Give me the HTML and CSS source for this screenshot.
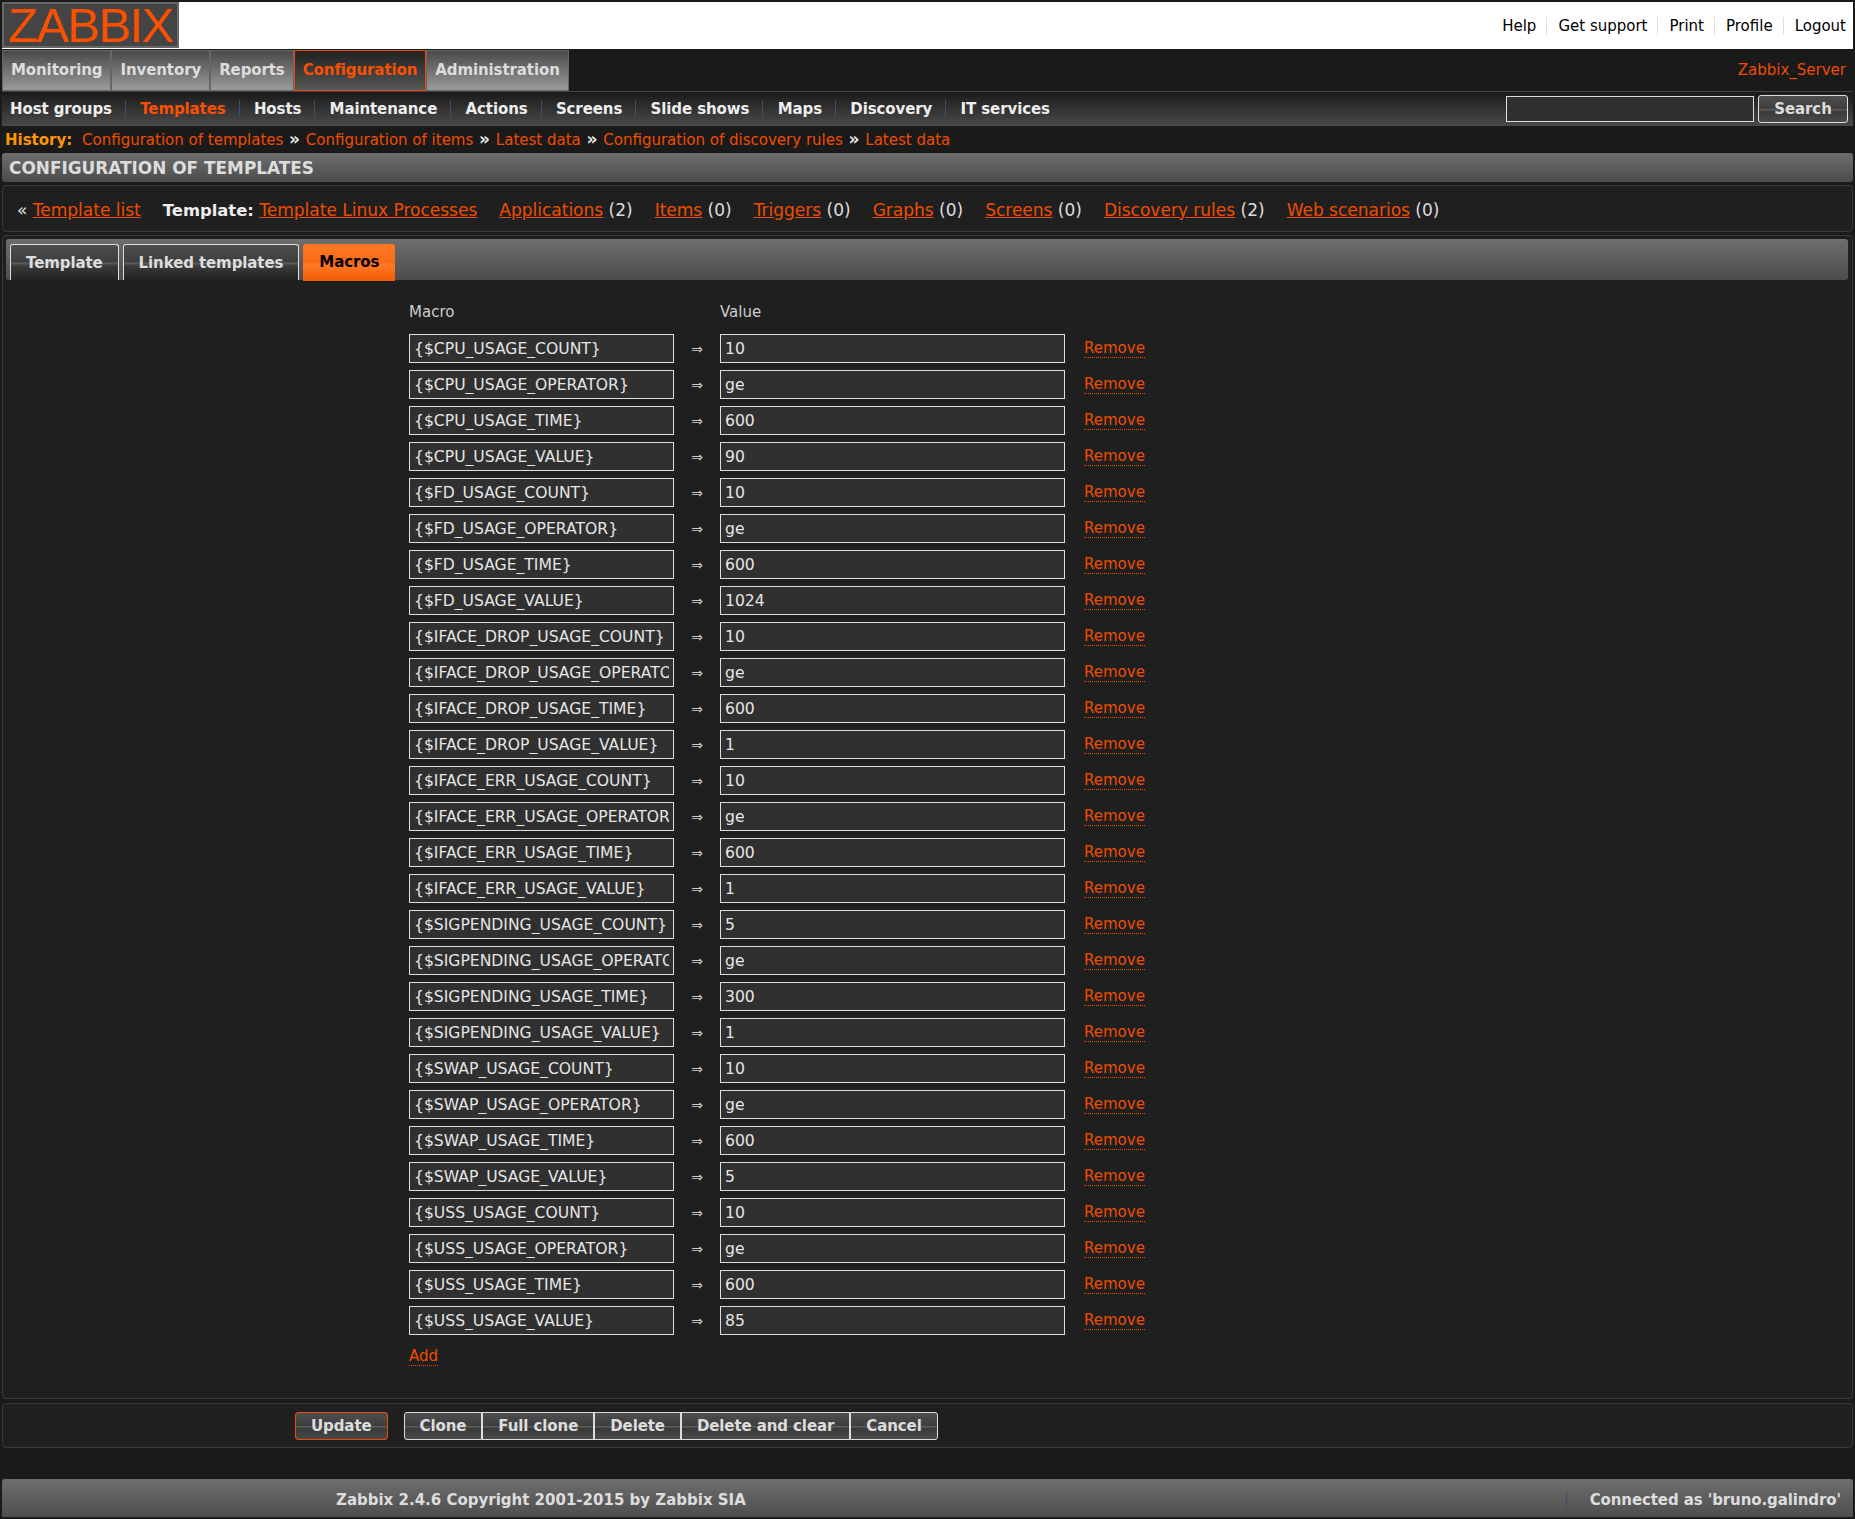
FILE: index.html
```html
<!DOCTYPE html>
<html lang="en">
<head>
  <meta charset="UTF-8">
  <title>Configuration of templates</title>
  <link rel="stylesheet" href="styles.css">
</head>
<body>
  <div class="topbar">
    <div class="logo">ZABBIX</div>
    <div class="toplinks">
      <a href="#">Help</a><a href="#">Get support</a><a href="#">Print</a><a href="#">Profile</a><a href="#">Logout</a>
    </div>
  </div>

  <div class="mainmenu">
    <a class="maintab" href="#">Monitoring</a>
    <a class="maintab" href="#">Inventory</a>
    <a class="maintab" href="#">Reports</a>
    <a class="maintab selected" href="#">Configuration</a>
    <a class="maintab" href="#">Administration</a>
    <span class="servername">Zabbix_Server</span>
  </div>

  <div class="submenu">
    <div class="sublinks">
      <a href="#">Host groups</a><a class="selected" href="#">Templates</a><a href="#">Hosts</a><a href="#">Maintenance</a><a href="#">Actions</a><a href="#">Screens</a><a href="#">Slide shows</a><a href="#">Maps</a><a href="#">Discovery</a><a href="#">IT services</a>
    </div>
    <form class="searchform">
      <input class="searchbox" type="text">
      <button class="btn searchbtn" type="button">Search</button>
    </form>
  </div>

  <div class="history">
    <b>History:</b>
    <a href="#">Configuration of templates</a> <i>»</i>
    <a href="#">Configuration of items</a> <i>»</i>
    <a href="#">Latest data</a> <i>»</i>
    <a href="#">Configuration of discovery rules</a> <i>»</i>
    <a href="#">Latest data</a>
  </div>

  <div class="titlebar">CONFIGURATION OF TEMPLATES</div>

  <div class="panel hostnav">
    <span>« <a href="#">Template list</a></span>
    <span><b>Template:</b> <a href="#">Template Linux Processes</a></span>
    <span><a href="#">Applications</a> (2)</span>
    <span><a href="#">Items</a> (0)</span>
    <span><a href="#">Triggers</a> (0)</span>
    <span><a href="#">Graphs</a> (0)</span>
    <span><a href="#">Screens</a> (0)</span>
    <span><a href="#">Discovery rules</a> (2)</span>
    <span><a href="#">Web scenarios</a> (0)</span>
  </div>

  <div class="panel formpanel">
    <div class="tabbar">
      <a class="tab" href="#">Template</a>
      <a class="tab" href="#">Linked templates</a>
      <a class="tab active" href="#">Macros</a>
    </div>

    <div class="macros">
      <div class="macrohead">Macro</div><div></div><div class="macrohead">Value</div><div></div>

      <input class="macroinput" value="{$CPU_USAGE_COUNT}"><span class="arrow">⇒</span><input class="macroinput" value="10"><a class="remove" href="#">Remove</a>
      <input class="macroinput" value="{$CPU_USAGE_OPERATOR}"><span class="arrow">⇒</span><input class="macroinput" value="ge"><a class="remove" href="#">Remove</a>
      <input class="macroinput" value="{$CPU_USAGE_TIME}"><span class="arrow">⇒</span><input class="macroinput" value="600"><a class="remove" href="#">Remove</a>
      <input class="macroinput" value="{$CPU_USAGE_VALUE}"><span class="arrow">⇒</span><input class="macroinput" value="90"><a class="remove" href="#">Remove</a>
      <input class="macroinput" value="{$FD_USAGE_COUNT}"><span class="arrow">⇒</span><input class="macroinput" value="10"><a class="remove" href="#">Remove</a>
      <input class="macroinput" value="{$FD_USAGE_OPERATOR}"><span class="arrow">⇒</span><input class="macroinput" value="ge"><a class="remove" href="#">Remove</a>
      <input class="macroinput" value="{$FD_USAGE_TIME}"><span class="arrow">⇒</span><input class="macroinput" value="600"><a class="remove" href="#">Remove</a>
      <input class="macroinput" value="{$FD_USAGE_VALUE}"><span class="arrow">⇒</span><input class="macroinput" value="1024"><a class="remove" href="#">Remove</a>
      <input class="macroinput" value="{$IFACE_DROP_USAGE_COUNT}"><span class="arrow">⇒</span><input class="macroinput" value="10"><a class="remove" href="#">Remove</a>
      <input class="macroinput" value="{$IFACE_DROP_USAGE_OPERATOR}"><span class="arrow">⇒</span><input class="macroinput" value="ge"><a class="remove" href="#">Remove</a>
      <input class="macroinput" value="{$IFACE_DROP_USAGE_TIME}"><span class="arrow">⇒</span><input class="macroinput" value="600"><a class="remove" href="#">Remove</a>
      <input class="macroinput" value="{$IFACE_DROP_USAGE_VALUE}"><span class="arrow">⇒</span><input class="macroinput" value="1"><a class="remove" href="#">Remove</a>
      <input class="macroinput" value="{$IFACE_ERR_USAGE_COUNT}"><span class="arrow">⇒</span><input class="macroinput" value="10"><a class="remove" href="#">Remove</a>
      <input class="macroinput" value="{$IFACE_ERR_USAGE_OPERATOR}"><span class="arrow">⇒</span><input class="macroinput" value="ge"><a class="remove" href="#">Remove</a>
      <input class="macroinput" value="{$IFACE_ERR_USAGE_TIME}"><span class="arrow">⇒</span><input class="macroinput" value="600"><a class="remove" href="#">Remove</a>
      <input class="macroinput" value="{$IFACE_ERR_USAGE_VALUE}"><span class="arrow">⇒</span><input class="macroinput" value="1"><a class="remove" href="#">Remove</a>
      <input class="macroinput" value="{$SIGPENDING_USAGE_COUNT}"><span class="arrow">⇒</span><input class="macroinput" value="5"><a class="remove" href="#">Remove</a>
      <input class="macroinput" value="{$SIGPENDING_USAGE_OPERATOR}"><span class="arrow">⇒</span><input class="macroinput" value="ge"><a class="remove" href="#">Remove</a>
      <input class="macroinput" value="{$SIGPENDING_USAGE_TIME}"><span class="arrow">⇒</span><input class="macroinput" value="300"><a class="remove" href="#">Remove</a>
      <input class="macroinput" value="{$SIGPENDING_USAGE_VALUE}"><span class="arrow">⇒</span><input class="macroinput" value="1"><a class="remove" href="#">Remove</a>
      <input class="macroinput" value="{$SWAP_USAGE_COUNT}"><span class="arrow">⇒</span><input class="macroinput" value="10"><a class="remove" href="#">Remove</a>
      <input class="macroinput" value="{$SWAP_USAGE_OPERATOR}"><span class="arrow">⇒</span><input class="macroinput" value="ge"><a class="remove" href="#">Remove</a>
      <input class="macroinput" value="{$SWAP_USAGE_TIME}"><span class="arrow">⇒</span><input class="macroinput" value="600"><a class="remove" href="#">Remove</a>
      <input class="macroinput" value="{$SWAP_USAGE_VALUE}"><span class="arrow">⇒</span><input class="macroinput" value="5"><a class="remove" href="#">Remove</a>
      <input class="macroinput" value="{$USS_USAGE_COUNT}"><span class="arrow">⇒</span><input class="macroinput" value="10"><a class="remove" href="#">Remove</a>
      <input class="macroinput" value="{$USS_USAGE_OPERATOR}"><span class="arrow">⇒</span><input class="macroinput" value="ge"><a class="remove" href="#">Remove</a>
      <input class="macroinput" value="{$USS_USAGE_TIME}"><span class="arrow">⇒</span><input class="macroinput" value="600"><a class="remove" href="#">Remove</a>
      <input class="macroinput" value="{$USS_USAGE_VALUE}"><span class="arrow">⇒</span><input class="macroinput" value="85"><a class="remove" href="#">Remove</a>

      <div class="addrow"><a class="remove" href="#">Add</a></div>
    </div>
  </div>

  <div class="panel buttons">
    <button class="btn update" type="button">Update</button>
    <div class="btngroup">
      <button class="btn" type="button">Clone</button>
      <button class="btn" type="button">Full clone</button>
      <button class="btn" type="button">Delete</button>
      <button class="btn" type="button">Delete and clear</button>
      <button class="btn" type="button">Cancel</button>
    </div>
  </div>

  <div class="footer">
    <span class="copyright">Zabbix 2.4.6 Copyright 2001-2015 by Zabbix SIA</span>
    <span class="connected">Connected as 'bruno.galindro'</span>
  </div>
</body>
</html>
```

FILE: styles.css
```css
body {
  font-family: "DejaVu Sans", Verdana, sans-serif;
  font-size: 15px;
  margin: 0;
  padding: 2px 2px 0;
  background-color: #1a1a1a;
  color: #ddd;
  height: 1517px;
  box-sizing: border-box;
  overflow: hidden;
}

a {
  color: #f04c00;
}

/* Top white bar */
.topbar {
  background-color: #fff;
  height: 47px;
  display: flex;
  justify-content: space-between;
  align-items: flex-start;
}

.logo {
  width: 177px;
  height: 46px;
  background: #444;
  border: 2px solid #666;
  box-sizing: border-box;
  color: #fa5000;
  font-family: "Liberation Sans", Arial, sans-serif;
  font-size: 49px;
  line-height: 42px;
  letter-spacing: -1.6px;
  text-align: center;
}

.toplinks {
  display: flex;
  align-items: center;
  height: 47px;
}

.toplinks a {
  color: #000;
  text-decoration: none;
  padding: 0 10px 0 11px;
  line-height: 18px;
  border-right: 1px solid #ddd;
}

.toplinks a:last-child {
  border-right: none;
  padding-right: 7px;
}

/* Main menu */
.mainmenu {
  display: flex;
  align-items: stretch;
  height: 41px;
  margin-top: 1px;
}

.maintab {
  font-size: 15px;
  letter-spacing: -0.1px;
  font-weight: bold;
  text-decoration: none;
  color: #ddd;
  padding: 0 8px;
  line-height: 38px;
  height: 41px;
  box-sizing: border-box;
  background: linear-gradient(#4a4a4a, #9a9a9a);
  border: 1px solid #666;
}

.maintab.selected {
  color: #fa5000;
  background: linear-gradient(#222, #555);
  border-color: #f04c00;
}

.servername {
  color: #f04c00;
  margin-left: auto;
  line-height: 40px;
  padding-right: 7px;
}

/* Sub menu */
.submenu {
  display: flex;
  justify-content: space-between;
  align-items: center;
  height: 35px;
  box-sizing: border-box;
  border-top: 1px solid #444;
  background: linear-gradient(#1a1a1a, #4a4a4a);
  padding-right: 5px;
}

.sublinks {
  padding-left: 1px;
}

.sublinks a {
  color: #eee;
  font-size: 15px;
  letter-spacing: -0.1px;
  font-weight: bold;
  text-decoration: none;
  padding: 0 13px 0 7px;
  margin-right: 7.3px;
  border-right: 1px solid #44486a;
}

.sublinks a:last-child {
  border-right: none;
}

.sublinks a.selected {
  color: #fa5000;
}

.searchform {
  display: flex;
  align-items: center;
  gap: 4px;
}

.searchbox {
  width: 248px;
  height: 26px;
  box-sizing: border-box;
  background: #303030;
  border: 1px solid #ddd;
}

.btn {
  font-family: inherit;
  font-size: 15px;
  letter-spacing: -0.1px;
  font-weight: bold;
  color: #ddd;
  height: 28px;
  padding: 0 15px;
  border: 1px solid #ddd;
  border-radius: 3px;
  background: linear-gradient(#4e4e4e, #3e3e3e 48%, #5c5c5c 52%, #3a3a3a 60%, #4a4a4a);
}

.searchbtn {
  width: 90px;
  padding: 0;
}

/* History */
.history {
  height: 27px;
  line-height: 27px;
  padding-left: 3px;
  color: #f04c00;
}

.history a {
  text-decoration: none;
  margin: 0 1px;
}

.history b {
  color: #ff9600;
  margin-right: 4px;
}

.history i {
  color: #eee;
  font-size: 17px;
  font-style: normal;
  font-weight: bold;
}

/* Section title */
.titlebar {
  height: 29px;
  line-height: 31px;
  padding-left: 7px;
  font-size: 16.9px;
  font-weight: bold;
  color: #ddd;
  border-radius: 3px;
  background: linear-gradient(#6e6e6e, #4c4c4c);
}

.panel {
  border: 1px solid #3a3a3a;
  border-radius: 4px;
  background-color: #1f1f1f;
  box-sizing: border-box;
}

.hostnav {
  margin-top: 3px;
  height: 47px;
  display: flex;
  align-items: center;
  gap: 22px;
  padding: 2px 0 0 14px;
  font-size: 17px;
}

.hostnav b {
  color: #eee;
  font-size: 16.4px;
}

/* Form with tabs */
.formpanel {
  margin-top: 3px;
  height: 1164px;
  padding: 3px 4px 0 3px;
}

.tabbar {
  display: flex;
  align-items: flex-end;
  gap: 4px;
  height: 41px;
  padding-left: 4px;
  box-sizing: border-box;
  border-radius: 3px;
  background: linear-gradient(#6e6e6e, #4c4c4c);
}

.tab {
  height: 36px;
  line-height: 36px;
  padding: 0 15px;
  color: #ddd;
  font-size: 15px;
  letter-spacing: -0.1px;
  font-weight: bold;
  text-decoration: none;
  box-sizing: border-box;
  border: 1px solid #ddd;
  border-bottom: none;
  border-radius: 3px 3px 0 0;
  background: linear-gradient(#4e4e4e, #3e3e3e 48%, #5c5c5c 52%, #3a3a3a 60%, #222);
}

.tab.active {
  color: #000;
  height: 37px;
  margin-bottom: -1px;
  padding: 0 16px;
  border: none;
  background: linear-gradient(#ff7a26 0%, #fa6a14 50%, #ff7a26 55%, #f05a00 100%);
}

.macros {
  display: grid;
  grid-template-columns: 265px 46px 345px auto;
  grid-template-rows: 31px;
  grid-auto-rows: 29px;
  row-gap: 7px;
  align-items: center;
  justify-content: start;
  margin: 16px 0 0 403px;
}

.macrohead {
  color: #ccc;
}

.macroinput {
  font-family: inherit;
  font-size: 15.6px;
  color: #e6e6e6;
  width: 100%;
  height: 29px;
  padding: 1px 4px 0;
  box-sizing: border-box;
  border: 1px solid #ddd;
  background: #303030;
}

.arrow {
  text-align: center;
  font-size: 14px;
  color: #ccc;
}

.remove {
  color: #f04c00;
  margin: 1px 0 0 19px;
  text-decoration: none;
  justify-self: start;
  border-bottom: 1px dotted #f04c00;
  line-height: 17px;
}

.addrow {
  grid-column: 1 / -1;
}

.addrow .remove {
  margin-left: 0;
  display: inline-block;
}

/* Bottom buttons */
.buttons {
  margin-top: 4px;
  height: 45px;
  display: flex;
  align-items: center;
  padding-left: 292px;
  gap: 16px;
}

.update {
  border-color: #f04c00;
}

.btngroup {
  display: flex;
}

.btngroup .btn {
  border-radius: 0;
}

.btngroup .btn:first-child {
  border-radius: 3px 0 0 3px;
}

.btngroup .btn:last-child {
  border-radius: 0 3px 3px 0;
}

/* Footer */
.footer {
  margin-top: 31px;
  height: 38px;
  border-radius: 3px;
  background: linear-gradient(#6e6e6e, #4c4c4c);
  display: flex;
  justify-content: space-between;
  align-items: center;
  font-weight: bold;
  color: #ddd;
  padding: 2px 12px 0 334px;
}

.connected {
  letter-spacing: -0.1px;
  padding-left: 24px;
  background: linear-gradient(#44486a, #44486a) left center / 1px 16px no-repeat;
}
```
